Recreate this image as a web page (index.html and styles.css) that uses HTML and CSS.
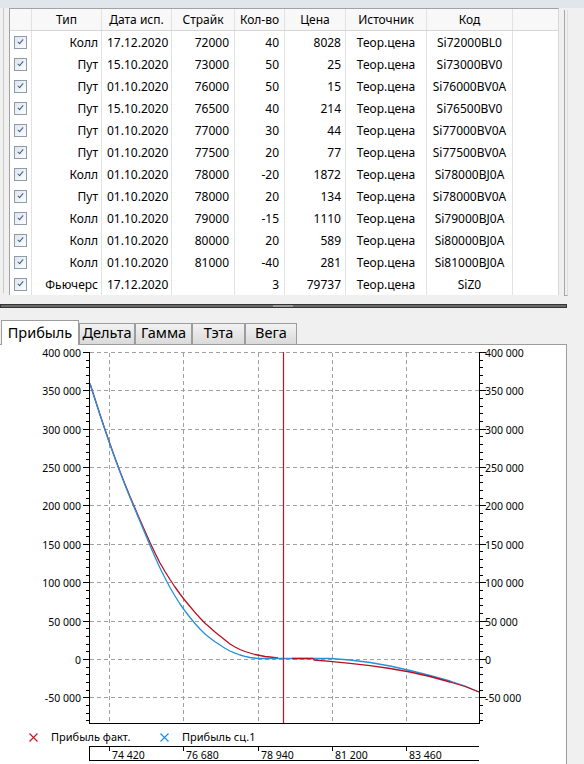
FILE: index.html
```html
<!DOCTYPE html>
<html>
<head>
<meta charset="utf-8">
<link rel="stylesheet" href="styles.css">
</head>
<body>
<div class="top"></div>
<div class="upper">
  <div class="outer">
    <div class="grid">
      <div class="row head">
        <div class="c"></div>
        <div class="c m">Тип</div>
        <div class="c m">Дата исп.</div>
        <div class="c m">Страйк</div>
        <div class="c m">Кол-во</div>
        <div class="c m">Цена</div>
        <div class="c m">Источник</div>
        <div class="c m">Код</div>
        <div class="c"></div>
      </div>
      <div class="row"><div class="c m"><span class="chk"></span></div><div class="c r t">Колл</div><div class="c l">17.12.2020</div><div class="c r">72000</div><div class="c r">40</div><div class="c r p">8028</div><div class="c m">Теор.цена</div><div class="c m">Si72000BL0</div><div class="c"></div></div>
      <div class="row"><div class="c m"><span class="chk"></span></div><div class="c r t">Пут</div><div class="c l">15.10.2020</div><div class="c r">73000</div><div class="c r">50</div><div class="c r p">25</div><div class="c m">Теор.цена</div><div class="c m">Si73000BV0</div><div class="c"></div></div>
      <div class="row"><div class="c m"><span class="chk"></span></div><div class="c r t">Пут</div><div class="c l">01.10.2020</div><div class="c r">76000</div><div class="c r">50</div><div class="c r p">15</div><div class="c m">Теор.цена</div><div class="c m">Si76000BV0A</div><div class="c"></div></div>
      <div class="row"><div class="c m"><span class="chk"></span></div><div class="c r t">Пут</div><div class="c l">15.10.2020</div><div class="c r">76500</div><div class="c r">40</div><div class="c r p">214</div><div class="c m">Теор.цена</div><div class="c m">Si76500BV0</div><div class="c"></div></div>
      <div class="row"><div class="c m"><span class="chk"></span></div><div class="c r t">Пут</div><div class="c l">01.10.2020</div><div class="c r">77000</div><div class="c r">30</div><div class="c r p">44</div><div class="c m">Теор.цена</div><div class="c m">Si77000BV0A</div><div class="c"></div></div>
      <div class="row"><div class="c m"><span class="chk"></span></div><div class="c r t">Пут</div><div class="c l">01.10.2020</div><div class="c r">77500</div><div class="c r">20</div><div class="c r p">77</div><div class="c m">Теор.цена</div><div class="c m">Si77500BV0A</div><div class="c"></div></div>
      <div class="row"><div class="c m"><span class="chk"></span></div><div class="c r t">Колл</div><div class="c l">01.10.2020</div><div class="c r">78000</div><div class="c r">-20</div><div class="c r p">1872</div><div class="c m">Теор.цена</div><div class="c m">Si78000BJ0A</div><div class="c"></div></div>
      <div class="row"><div class="c m"><span class="chk"></span></div><div class="c r t">Пут</div><div class="c l">01.10.2020</div><div class="c r">78000</div><div class="c r">20</div><div class="c r p">134</div><div class="c m">Теор.цена</div><div class="c m">Si78000BV0A</div><div class="c"></div></div>
      <div class="row"><div class="c m"><span class="chk"></span></div><div class="c r t">Колл</div><div class="c l">01.10.2020</div><div class="c r">79000</div><div class="c r">-15</div><div class="c r p">1110</div><div class="c m">Теор.цена</div><div class="c m">Si79000BJ0A</div><div class="c"></div></div>
      <div class="row"><div class="c m"><span class="chk"></span></div><div class="c r t">Колл</div><div class="c l">01.10.2020</div><div class="c r">80000</div><div class="c r">20</div><div class="c r p">589</div><div class="c m">Теор.цена</div><div class="c m">Si80000BJ0A</div><div class="c"></div></div>
      <div class="row"><div class="c m"><span class="chk"></span></div><div class="c r t">Колл</div><div class="c l">01.10.2020</div><div class="c r">81000</div><div class="c r">-40</div><div class="c r p">281</div><div class="c m">Теор.цена</div><div class="c m">Si81000BJ0A</div><div class="c"></div></div>
      <div class="row"><div class="c m"><span class="chk"></span></div><div class="c r t">Фьючерс</div><div class="c l">17.12.2020</div><div class="c r"></div><div class="c r">3</div><div class="c r p">79737</div><div class="c m">Теор.цена</div><div class="c m">SiZ0</div><div class="c"></div></div>
    </div>
  </div>
  <div class="vframe"></div>
</div>
<div class="splitter"><div class="bar bar-l"></div><div class="grip"></div><div class="bar bar-r"></div></div>
<div class="tabs">
  <div class="tab sel w1">Прибыль</div>
  <div class="tab w2">Дельта</div>
  <div class="tab w3">Гамма</div>
  <div class="tab w4">Тэта</div>
  <div class="tab w5">Вега</div>
</div>
<div class="panel">
<svg class="chart" width="566" height="419" viewBox="0 345 566 419">
  <g class="gridl">
    <path d="M90 352.5H479M90 390.5H479M90 429.5H479M90 467.5H479M90 505.5H479M90 544.5H479M90 582.5H479M90 621.5H479M90 659.5H479M90 697.5H479"/>
    <path d="M109.5 353V723M183.5 353V723M258.5 353V723M332.5 353V723M406.5 353V723"/>
  </g>
  <polyline class="red" points="90,383.5 95,399 100,414.5 105,429.5 110,444 115,458 120,471.5 125,484.3 130,496.5 135,508.3 140,520 145,531.3 150,542.5 155,553 160,563 165,571.5 170,579.5 175,587 180,594 185,600.5 190,606.5 195,612.3 200,618 205,623.3 210,627.5 215,632 220,636 225,640 230,644 235,647 240,649.5 245,651.5 250,653 255,654.5 260,655.5 265,656.5 270,657 278,658"/>
  <polyline class="blue" points="90,384 95,399.5 100,415 105,430 110,444.5 115,458.5 120,472 125,485 130,497.5 135,509.5 140,521.5 145,533.5 150,545.5 155,557 160,568 165,578 170,587.5 175,596 180,604 185,611 190,617.5 195,623.5 200,629 205,634 210,638 215,641.8 220,645 225,648.2 230,651 235,653.2 240,655 245,656.4 250,657.5 258,658.5 330,658.5 350,660 370,662.5 390,666 410,670.5 430,675.5 450,681 465,686 479,692"/>
  <polyline class="red" points="292,658.5 313,658.5 314,660 330,661.3 350,663.3 370,665.7 390,668.5 410,672 430,676.5 450,682 465,686.5 479,692"/>
  <path class="vline" d="M283.5 352V723"/>
  <g class="axis">
    <path d="M89.5 352V724M479.5 352V724M89 723.5H480"/>
    <path d="M83 352.5h7M83 390.5h7M83 429.5h7M83 467.5h7M83 505.5h7M83 544.5h7M83 582.5h7M83 621.5h7M83 659.5h7M83 697.5h7"/>
    <path d="M86 360.5h4M86 367.5h4M86 375.5h4M86 383.5h4M86 398.5h4M86 406.5h4M86 413.5h4M86 421.5h4M86 436.5h4M86 444.5h4M86 452.5h4M86 459.5h4M86 475.5h4M86 482.5h4M86 490.5h4M86 498.5h4M86 513.5h4M86 521.5h4M86 529.5h4M86 536.5h4M86 551.5h4M86 559.5h4M86 567.5h4M86 575.5h4M86 590.5h4M86 598.5h4M86 605.5h4M86 613.5h4M86 628.5h4M86 636.5h4M86 644.5h4M86 651.5h4M86 667.5h4M86 674.5h4M86 682.5h4M86 690.5h4M86 705.5h4M86 713.5h4M86 720.5h4"/>
    <path d="M480 352.5h6M480 390.5h6M480 429.5h6M480 467.5h6M480 505.5h6M480 544.5h6M480 582.5h6M480 621.5h6M480 659.5h6M480 697.5h6"/>
    <path d="M480 360.5h3M480 367.5h3M480 375.5h3M480 383.5h3M480 398.5h3M480 406.5h3M480 413.5h3M480 421.5h3M480 436.5h3M480 444.5h3M480 452.5h3M480 459.5h3M480 475.5h3M480 482.5h3M480 490.5h3M480 498.5h3M480 513.5h3M480 521.5h3M480 529.5h3M480 536.5h3M480 551.5h3M480 559.5h3M480 567.5h3M480 575.5h3M480 590.5h3M480 598.5h3M480 605.5h3M480 613.5h3M480 628.5h3M480 636.5h3M480 644.5h3M480 651.5h3M480 667.5h3M480 674.5h3M480 682.5h3M480 690.5h3M480 705.5h3M480 713.5h3M480 720.5h3"/>
    <path d="M89 746.5H479M89 760.5H479M89.5 746V761M109.5 747v4M183.5 747v4M258.5 747v4M332.5 747v4M406.5 747v4"/>
  </g>
  <g class="ax">
    <text x="81" y="356.5" text-anchor="end">400 000</text>
    <text x="81" y="394.5" text-anchor="end">350 000</text>
    <text x="81" y="433.5" text-anchor="end">300 000</text>
    <text x="81" y="471.5" text-anchor="end">250 000</text>
    <text x="81" y="509.5" text-anchor="end">200 000</text>
    <text x="81" y="548.5" text-anchor="end">150 000</text>
    <text x="81" y="586.5" text-anchor="end">100 000</text>
    <text x="81" y="625.5" text-anchor="end">50 000</text>
    <text x="81" y="663.5" text-anchor="end">0</text>
    <text x="81" y="701.5" text-anchor="end">-50 000</text>
    <text x="485" y="356.5">400 000</text>
    <text x="485" y="394.5">350 000</text>
    <text x="485" y="433.5">300 000</text>
    <text x="485" y="471.5">250 000</text>
    <text x="485" y="509.5">200 000</text>
    <text x="485" y="548.5">150 000</text>
    <text x="485" y="586.5">100 000</text>
    <text x="485" y="625.5">50 000</text>
    <text x="485" y="663.5">0</text>
    <text x="485" y="701.5">-50 000</text>
    <text x="112" y="758.5">74 420</text>
    <text x="186" y="758.5">76 680</text>
    <text x="261" y="758.5">78 940</text>
    <text x="335" y="758.5">81 200</text>
    <text x="409" y="758.5">83 460</text>
  </g>
  <path class="xred" d="M29.5 733.5L37.5 741.5M37.5 733.5L29.5 741.5"/>
  <path class="xblue" d="M160.5 733.5L168.5 741.5M168.5 733.5L160.5 741.5"/>
  <g class="lg">
    <text x="51" y="741">Прибыль факт.</text>
    <text x="182" y="741">Прибыль сц.1</text>
  </g>
</svg>
</div>
</body>
</html>
```
FILE: styles.css
```css
html, body {
  margin: 0;
  padding: 0;
}
body {
  width: 584px;
  height: 764px;
  overflow: hidden;
  background: #f0f0f0;
  font-family: "Noto Sans", "Open Sans", sans-serif;
  color: #000;
}
.top {
  height: 8px;
  background: #e1e6ec;
}
.upper {
  display: flex;
  align-items: flex-start;
  height: 296px;
}
.outer {
  margin-left: 3px;
  padding-left: 5px;
  border-left: 1px solid #c9c9c9;
  height: 285px;
}
.grid {
  width: 548px;
  border-left: 1px solid #a2a2a2;
  border-top: 1px solid #a2a2a2;
  border-right: 1px solid #d8d8d8;
  background: #fff;
  font-size: 12px;
}
.row {
  display: grid;
  grid-template-columns: 22px 70px 70px 63px 50px 61px 81px 86px 44px;
  height: 22px;
}
.head {
  background: #f8f8f8;
  border-bottom: 1px solid #d6d6d6;
  height: 21px;
}
.c {
  box-sizing: border-box;
  border-right: 1px solid #e2e2e2;
  padding: 0 5px;
  display: flex;
  align-items: center;
  white-space: nowrap;
  overflow: hidden;
}
.row .c:last-child {
  border-right: none;
}
.r { justify-content: flex-end; }
.l { justify-content: flex-start; }
.m { justify-content: center; padding: 0; }
.t { padding-right: 3px; }
.p { padding-right: 4px; }
.chk {
  width: 13px;
  height: 13px;
  box-sizing: border-box;
  border: 1px solid #8e9bab;
  background: linear-gradient(135deg, #dfe5ec, #fdfdfd);
  display: inline-flex;
  align-items: center;
  justify-content: center;
}
.chk::after {
  content: "";
  width: 2px;
  height: 5px;
  border-right: 1.5px solid #3d5d94;
  border-bottom: 1.5px solid #3d5d94;
  transform: rotate(40deg);
  margin-top: -2px;
}
.vframe {
  margin-left: 5px;
  margin-top: 2px;
  width: 2px;
  height: 285px;
  border-left: 1px solid #a6a6a6;
  border-bottom: 1px solid #a6a6a6;
  border-right: 1px solid #dedede;
}
.splitter {
  display: flex;
  width: 567px;
  height: 4px;
}
.bar {
  box-sizing: border-box;
  height: 4px;
  background: #6a6a6a;
  border: 1px solid #353535;
}
.bar-l { width: 273px; border-right: none; }
.bar-r { flex: 1; border-left: none; }
.grip {
  width: 20px;
  box-sizing: border-box;
  height: 4px;
  border-top: 1px solid #353535;
  border-bottom: 1px solid #353535;
  background: #9a9a9a;
}
.tabs {
  margin-top: 12px;
  height: 24px;
  display: flex;
  align-items: flex-end;
  padding-left: 1px;
}
.tab {
  box-sizing: border-box;
  height: 21px;
  border: 1px solid #9c9c9c;
  border-bottom: none;
  background: linear-gradient(#f2f2f2, #dadada);
  font-size: 14.5px;
  line-height: 17px;
  text-align: center;
  white-space: nowrap;
}
.tab.sel {
  height: 25px;
  margin-bottom: -1px;
  padding-top: 3px;
  background: #fff;
  position: relative;
  z-index: 1;
}
.w1 { width: 78px; }
.w2 { width: 56px; }
.w3 { width: 57px; }
.w4 { width: 53px; }
.w5 { width: 52px; }
.panel {
  box-sizing: border-box;
  width: 567px;
  height: 420px;
  background: #fff;
  border-top: 1px solid #9c9c9c;
  border-right: 1px solid #9c9c9c;
}
.chart {
  display: block;
}
.gridl path {
  fill: none;
  stroke: #a0a0a0;
  stroke-width: 1;
  stroke-dasharray: 4 3;
}
.axis path {
  fill: none;
  stroke: #000;
  stroke-width: 1;
}
.blue {
  fill: none;
  stroke: #2590db;
  stroke-width: 1.3;
  stroke-linejoin: round;
}
.red {
  fill: none;
  stroke: #b8101e;
  stroke-width: 1.3;
  stroke-linejoin: round;
}
.vline {
  fill: none;
  stroke: #d0101c;
  stroke-width: 1.2;
}
.xred {
  fill: none;
  stroke: #d0101c;
  stroke-width: 1.1;
}
.xblue {
  fill: none;
  stroke: #1a8ee6;
  stroke-width: 1.1;
}
.ax text {
  font-family: "Noto Sans", sans-serif;
  font-size: 10.5px;
  fill: #000;
}
.lg text {
  font-family: "Noto Sans", sans-serif;
  font-size: 11px;
  fill: #000;
}
```
